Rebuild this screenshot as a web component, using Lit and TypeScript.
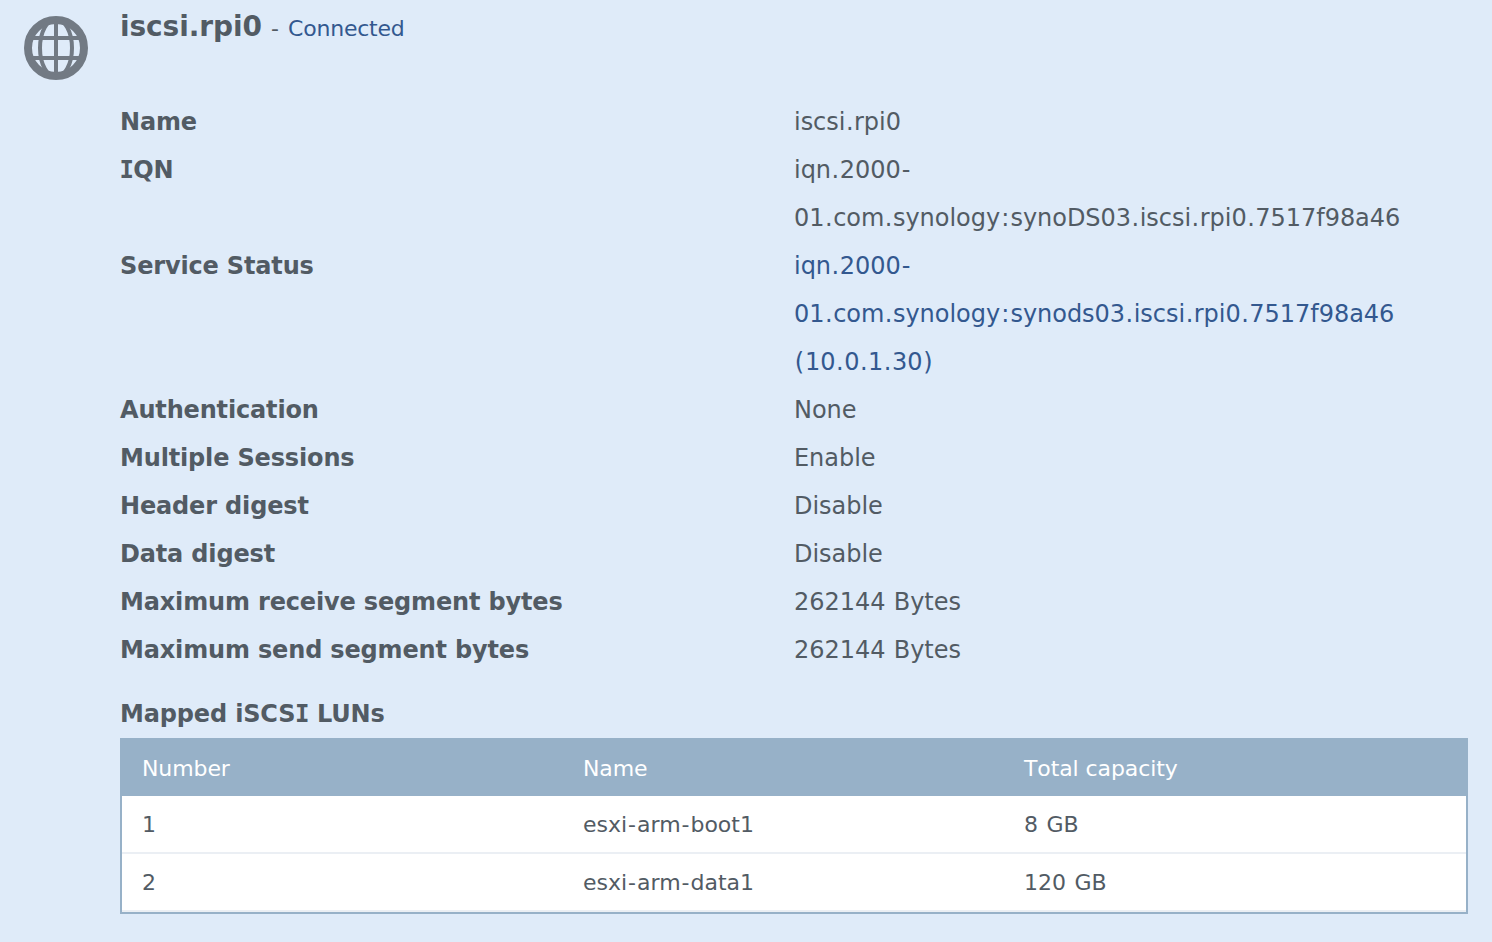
import { LitElement, html, css } from "lit";
import { customElement } from "lit/decorators.js";

interface Detail {
  label: string;
  lines: string[];
  link?: boolean;
}

const details: Detail[] = [
  { label: "Name", lines: ["iscsi.rpi0"] },
  { label: "IQN", lines: ["iqn.2000-", "01.com.synology:synoDS03.iscsi.rpi0.7517f98a46"] },
  {
    label: "Service Status",
    lines: ["iqn.2000-", "01.com.synology:synods03.iscsi.rpi0.7517f98a46", "(10.0.1.30)"],
    link: true,
  },
  { label: "Authentication", lines: ["None"] },
  { label: "Multiple Sessions", lines: ["Enable"] },
  { label: "Header digest", lines: ["Disable"] },
  { label: "Data digest", lines: ["Disable"] },
  { label: "Maximum receive segment bytes", lines: ["262144 Bytes"] },
  { label: "Maximum send segment bytes", lines: ["262144 Bytes"] },
];

const luns = [
  { number: "1", name: "esxi-arm-boot1", capacity: "8 GB" },
  { number: "2", name: "esxi-arm-data1", capacity: "120 GB" },
];

// Punctuation gets roomier side bearings, and the bold capital I is set with serifs.
const glyphClass: Record<string, string> = {
  ".": "dot",
  ":": "colon",
  "-": "dash",
  "(": "paren",
  ")": "paren",
};

const spaced = (text: string) =>
  text
    .split(/([.:()-])/)
    .filter(Boolean)
    .map((part) => (glyphClass[part] ? html`<span class=${glyphClass[part]}>${part}</span>` : part));

const serifI = (text: string) =>
  text
    .split(/(I)/)
    .filter(Boolean)
    .map((part) => (part === "I" ? html`<span class="serif-i">I</span>` : part));

const glyphStyles = css`
  .dot {
    margin: 0 0.023em;
  }
  .colon {
    margin: 0 0.05em;
  }
  .dash {
    margin: 0 0.044em;
  }
  .paren {
    margin: 0 0.035em;
  }
  .serif-i {
    margin: 0 -0.02em;
    font-family: "DejaVu Sans Mono", monospace;
    line-height: 1;
  }
`;

@customElement("lun-table")
export class LunTable extends LitElement {
  static styles = [
    glyphStyles,
    css`
      :host {
        display: block;
        box-sizing: border-box;
        border: 2px solid #97b1c8;
        background: #fff;
        font-size: 22px;
        color: #525b64;
        word-spacing: 1.5px;
      }
      .row {
        display: grid;
        grid-template-columns: 441px 441px 1fr;
        box-sizing: border-box;
        height: 58px;
        padding: 1px 0 0 20px;
        line-height: 56px;
        border-bottom: 2px solid #ebeff4;
      }
      .head {
        height: 56px;
        color: #fff;
        background: #97b1c8;
        border-bottom: none;
        font-kerning: none;
        letter-spacing: -0.1px;
        word-spacing: 0;
      }
    `,
  ];

  render() {
    return html`
      <div class="row head"><span>Number</span><span>Name</span><span>Total capacity</span></div>
      ${luns.map(
        (l) => html`<div class="row"><span>${l.number}</span><span>${spaced(l.name)}</span><span>${l.capacity}</span></div>`
      )}
    `;
  }
}

@customElement("app-root")
export class AppRoot extends LitElement {
  static styles = [
    glyphStyles,
    css`
      :host {
        display: flex;
        gap: 32px;
        box-sizing: border-box;
        height: 942px;
        padding: 0 24px;
        overflow: hidden;
        background: #dfebf9;
        color: #525b64;
        font-family: Verdana, "DejaVu Sans", sans-serif;
        font-size: 24px;
        word-spacing: 0.8px;
      }
      .globe {
        flex: none;
        width: 64px;
        height: 64px;
        margin-top: 16px;
      }
      .body {
        flex: 1;
        min-width: 0;
      }
      .title {
        height: 98px;
        box-sizing: border-box;
        padding-top: 5px;
        line-height: 44px;
        font-size: 22px;
        letter-spacing: -0.2px;
        word-spacing: 1.4px;
        white-space: pre;
      }
      .title b {
        font-size: 28px;
        letter-spacing: -0.08px;
      }
      .link {
        color: #33588f;
      }
      .detail {
        display: grid;
        grid-template-columns: 1fr 1fr;
        line-height: 48px;
        white-space: nowrap;
      }
      .label,
      .subtitle {
        font-weight: 700;
        letter-spacing: -0.16px;
        word-spacing: 0;
      }
      .line {
        display: block;
        letter-spacing: -0.04px;
      }
      .subtitle {
        margin-top: 16px;
        height: 48px;
        line-height: 48px;
      }
    `,
  ];

  render() {
    return html`
      <svg class="globe" viewBox="0 0 64 64" fill="none" stroke="#727a84">
        <circle cx="32" cy="32" r="28" stroke-width="8" />
        <path stroke-width="4" d="M32 6V58M7 22H57M7 42H57" />
        <ellipse cx="32" cy="32" rx="16" ry="29" stroke-width="4" />
      </svg>
      <div class="body">
        <div class="title"><b>iscsi.rpi0</b> <span class="dash">-</span> <span class="link">Connected</span></div>
        ${details.map(
          (d) => html`<div class="detail">
            <span class="label">${serifI(d.label)}</span>
            <span class=${d.link ? "link" : "value"}
              >${d.lines.map((t) => html`<span class="line">${spaced(t)}</span>`)}</span
            >
          </div>`
        )}
        <div class="subtitle">${serifI("Mapped iSCSI LUNs")}</div>
        <lun-table></lun-table>
      </div>
    `;
  }
}
